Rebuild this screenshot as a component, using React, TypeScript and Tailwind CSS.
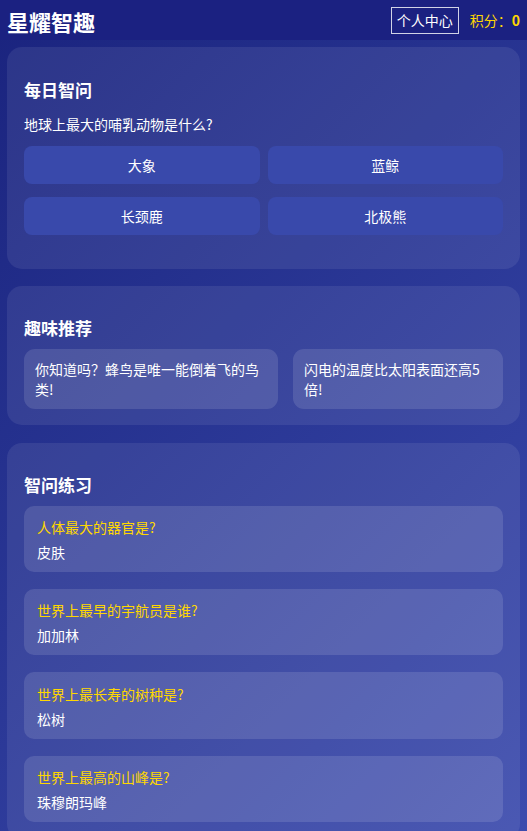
import React from "react";

const options = ["大象", "蓝鲸", "长颈鹿", "北极熊"];
const facts = [
  "你知道吗？蜂鸟是唯一能倒着飞的鸟类!",
  "闪电的温度比太阳表面还高5倍!",
];
const practice = [
  { q: "人体最大的器官是?", a: "皮肤" },
  { q: "世界上最早的宇航员是谁?", a: "加加林" },
  { q: "世界上最长寿的树种是?", a: "松树" },
  { q: "世界上最高的山峰是?", a: "珠穆朗玛峰" },
];

export default function App() {
  return (
    <div className="min-h-screen bg-linear-135 from-[#1a237e] to-[#3c4bae] text-white font-['Noto_Sans_CJK_SC','Noto_Sans',sans-serif]">
      <header className="h-10 bg-[#1b2181] flex items-center justify-between px-[7px]">
        <h1 className="text-[22px] font-bold leading-[28px] mt-[2px]">星耀智趣</h1>
        <div className="flex items-center gap-[11px]">
          <button className="h-[27px] px-[5px] border border-white/80 text-[14px] leading-[20px] text-white">
            个人中心
          </button>
          <span className="text-[#ffd700] text-[14px] leading-[20px]">
            积分：<b className="font-bold">0</b>
          </span>
        </div>
      </header>

      <main className="px-[7px] pt-[7px] pb-[8px] flex flex-col gap-[17.3px]">
        <section className="rounded-[15px] bg-white/[0.08] px-[17px] pt-[31px] pb-[34px]">
          <h2 className="text-[17px] font-bold leading-[24px] mb-[12px]">每日智问</h2>
          <p className="text-[14px] leading-[20px] mb-[12px]">地球上最大的哺乳动物是什么?</p>
          <div className="grid grid-cols-2 gap-x-2 gap-y-[12.5px]">
            {options.map((o) => (
              <button
                key={o}
                className="h-[38px] rounded-[8px] bg-[#3949ab] text-[14px] leading-[20px] text-white"
              >
                {o}
              </button>
            ))}
          </div>
        </section>

        <section className="rounded-[15px] bg-white/[0.08] px-[17px] pt-[30px] pb-[16.5px]">
          <h2 className="text-[17px] font-bold leading-[24px] mb-[9px]">趣味推荐</h2>
          <div className="grid grid-cols-[254px_210px] gap-x-[15px]">
            {facts.map((f) => (
              <div
                key={f}
                className="rounded-[11px] bg-white/[0.12] px-[11px] py-[10px] text-[14px] leading-[20px]"
              >
                {f}
              </div>
            ))}
          </div>
        </section>

        <section className="rounded-[15px] bg-white/[0.08] px-[17px] pt-[30px] pb-[16.5px]">
          <h2 className="text-[17px] font-bold leading-[24px] mb-[9px]">智问练习</h2>
          <div className="flex flex-col gap-[17px]">
            {practice.map((p) => (
              <div
                key={p.q}
                className="rounded-[10px] bg-white/[0.12] px-[13px] pt-[11.5px] pb-[9.9px] text-[14px] leading-[20px]"
              >
                <div className="text-[#ffd700] mb-[5px]">{p.q}</div>
                <div>{p.a}</div>
              </div>
            ))}
          </div>
        </section>
      </main>
    </div>
  );
}
